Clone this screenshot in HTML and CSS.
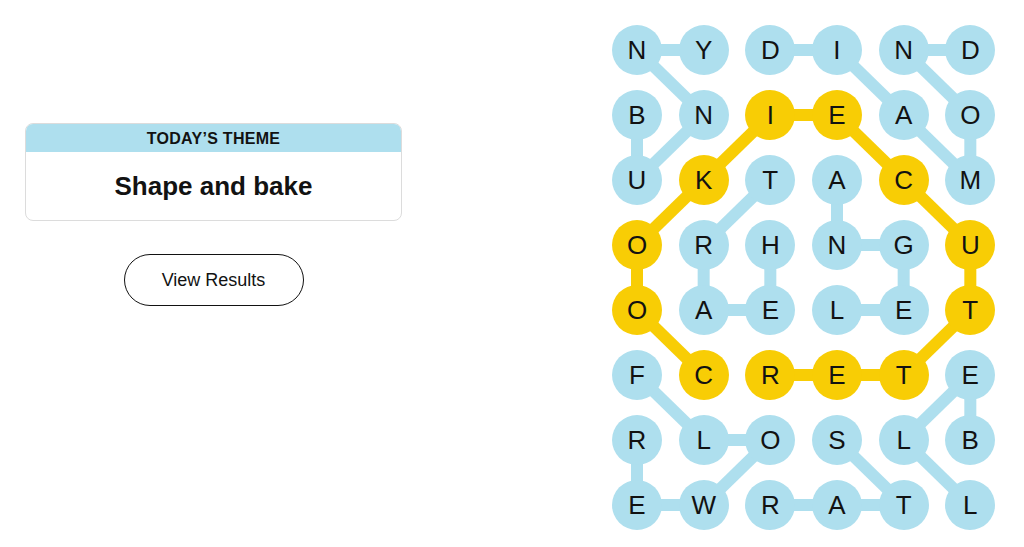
FILE: index.html
```html
<!DOCTYPE html>
<html lang="en">
<head>
    <meta charset="UTF-8">
    <meta name="viewport" content="width=device-width, initial-scale=1.0">
    <title>Strands</title>
    <link rel="stylesheet" href="styles.css">
</head>
<body>
    <div class="page">
        <div class="side">
            <div class="theme-card">
                <div class="theme-head">TODAY’S THEME</div>
                <div class="theme-body">Shape and bake</div>
            </div>
            <button class="btn-results">View Results</button>
        </div>

        <div class="board">
            <!-- connectors: col x = 25 + c*66.667, row y = 25 + r*65 -->
            <svg class="links" width="383.33" height="505" viewBox="0 0 383.33 505">
                <g class="blue">
                    <line x1="25" y1="25" x2="91.67" y2="25"/>
                    <line x1="25" y1="25" x2="91.67" y2="90"/>
                    <line x1="91.67" y1="90" x2="25" y2="155"/>
                    <line x1="25" y1="90" x2="25" y2="155"/>
                    <line x1="158.33" y1="25" x2="225" y2="25"/>
                    <line x1="225" y1="25" x2="291.67" y2="90"/>
                    <line x1="291.67" y1="90" x2="358.33" y2="155"/>
                    <line x1="358.33" y1="155" x2="358.33" y2="90"/>
                    <line x1="358.33" y1="90" x2="291.67" y2="25"/>
                    <line x1="291.67" y1="25" x2="358.33" y2="25"/>
                    <line x1="158.33" y1="155" x2="91.67" y2="220"/>
                    <line x1="91.67" y1="220" x2="91.67" y2="285"/>
                    <line x1="91.67" y1="285" x2="158.33" y2="285"/>
                    <line x1="158.33" y1="285" x2="158.33" y2="220"/>
                    <line x1="225" y1="155" x2="225" y2="220"/>
                    <line x1="225" y1="220" x2="291.67" y2="220"/>
                    <line x1="291.67" y1="220" x2="291.67" y2="285"/>
                    <line x1="291.67" y1="285" x2="225" y2="285"/>
                    <line x1="25" y1="350" x2="91.67" y2="415"/>
                    <line x1="91.67" y1="415" x2="158.33" y2="415"/>
                    <line x1="158.33" y1="415" x2="91.67" y2="480"/>
                    <line x1="91.67" y1="480" x2="25" y2="480"/>
                    <line x1="25" y1="480" x2="25" y2="415"/>
                    <line x1="225" y1="415" x2="291.67" y2="480"/>
                    <line x1="291.67" y1="480" x2="158.33" y2="480"/>
                    <line x1="358.33" y1="350" x2="291.67" y2="415"/>
                    <line x1="358.33" y1="350" x2="358.33" y2="415"/>
                    <line x1="291.67" y1="415" x2="358.33" y2="480"/>
                </g>
                <g class="gold">
                    <line x1="91.67" y1="350" x2="25" y2="285"/>
                    <line x1="25" y1="285" x2="25" y2="220"/>
                    <line x1="25" y1="220" x2="91.67" y2="155"/>
                    <line x1="91.67" y1="155" x2="158.33" y2="90"/>
                    <line x1="158.33" y1="90" x2="225" y2="90"/>
                    <line x1="225" y1="90" x2="291.67" y2="155"/>
                    <line x1="291.67" y1="155" x2="358.33" y2="220"/>
                    <line x1="358.33" y1="220" x2="358.33" y2="285"/>
                    <line x1="358.33" y1="285" x2="291.67" y2="350"/>
                    <line x1="291.67" y1="350" x2="158.33" y2="350"/>
                </g>
            </svg>

            <div class="cell">N</div><div class="cell">Y</div><div class="cell">D</div><div class="cell">I</div><div class="cell">N</div><div class="cell">D</div>
            <div class="cell">B</div><div class="cell">N</div><div class="cell span">I</div><div class="cell span">E</div><div class="cell">A</div><div class="cell">O</div>
            <div class="cell">U</div><div class="cell span">K</div><div class="cell">T</div><div class="cell">A</div><div class="cell span">C</div><div class="cell">M</div>
            <div class="cell span">O</div><div class="cell">R</div><div class="cell">H</div><div class="cell">N</div><div class="cell">G</div><div class="cell span">U</div>
            <div class="cell span">O</div><div class="cell">A</div><div class="cell">E</div><div class="cell">L</div><div class="cell">E</div><div class="cell span">T</div>
            <div class="cell">F</div><div class="cell span">C</div><div class="cell span">R</div><div class="cell span">E</div><div class="cell span">T</div><div class="cell">E</div>
            <div class="cell">R</div><div class="cell">L</div><div class="cell">O</div><div class="cell">S</div><div class="cell">L</div><div class="cell">B</div>
            <div class="cell">E</div><div class="cell">W</div><div class="cell">R</div><div class="cell">A</div><div class="cell">T</div><div class="cell">L</div>
        </div>
    </div>
</body>
</html>
```

FILE: styles.css
```css
body {
    font-family: 'Liberation Sans', Arial, sans-serif;
    background: #fff;
    color: #121212;
    margin: 0;
    padding: 0;
}
.page {
    display: flex;
    align-items: flex-start;
}
.side {
    width: 377px;
    padding: 123px 25px 0 25px;
}
.theme-card {
    border: 1px solid #dcdcdc;
    border-radius: 8px;
    overflow: hidden;
    background: #fff;
}
.theme-head {
    height: 28px;
    line-height: 29px;
    background: #aedfee;
    text-align: center;
    font-size: 16px;
    font-weight: bold;
    letter-spacing: 0.3px;
}
.theme-body {
    height: 68px;
    display: flex;
    align-items: center;
    justify-content: center;
    font-size: 26px;
    font-weight: bold;
}
.btn-results {
    display: block;
    width: 180px;
    height: 52px;
    margin: 33px auto 0 auto;
    background: #fff;
    border: 1px solid #121212;
    border-radius: 26px;
    font-family: inherit;
    font-size: 18px;
    color: #121212;
    cursor: pointer;
}
.board {
    position: relative;
    margin: 25px 0 0 185px;
    display: grid;
    grid-template-columns: repeat(6, 50px);
    grid-auto-rows: 50px;
    column-gap: 16.667px;
    row-gap: 15px;
}
.links {
    position: absolute;
    left: 0;
    top: 0;
    z-index: 0;
}
.links line {
    stroke-width: 12;
}
.links .blue line {
    stroke: #aedfee;
}
.links .gold line {
    stroke: #f8cd05;
}
.cell {
    position: relative;
    z-index: 1;
    width: 50px;
    height: 50px;
    border-radius: 50%;
    background: #aedfee;
    display: flex;
    align-items: center;
    justify-content: center;
    font-size: 26px;
    color: #121212;
}
.cell.span {
    background: #f8cd05;
}
```
